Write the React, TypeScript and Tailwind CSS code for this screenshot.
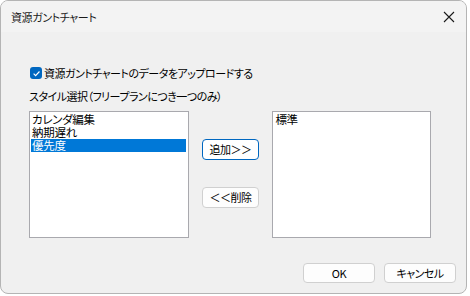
import React from "react";

const FONT = {
  fontFamily: '"Noto Sans CJK JP", "Noto Sans", sans-serif',
  fontFeatureSettings: '"palt"',
};

function CloseIcon() {
  return (
    <svg width="12" height="12" viewBox="0 0 12 12" className="text-[#1a1a1a]">
      <path d="M1 1 L11 11 M11 1 L1 11" stroke="currentColor" strokeWidth="1.1" fill="none" />
    </svg>
  );
}

function Checkbox() {
  return (
    <span className="w-[12px] h-[12px] rounded-[3px] bg-[#0067c0] flex items-center justify-center">
      <svg width="9" height="9" viewBox="0 0 10 10">
        <path d="M1.8 5.2 L4 7.3 L8.3 2.8" stroke="white" strokeWidth="1.3" fill="none" />
      </svg>
    </span>
  );
}

export default function App() {
  const leftItems = ["カレンダ編集", "納期遅れ", "優先度"];
  return (
    <div className="w-[470px] h-[296px] bg-white" style={FONT}>
      <div className="w-[467px] h-[294px] rounded-[8px] border border-[#b4b4b4] overflow-hidden flex flex-col bg-[#f0f0f0]">
        <div className="h-[31px] shrink-0 bg-[#f3f3f3] flex items-center justify-between pl-[10px] pr-[8px]">
          <span className="text-[11px] tracking-[-0.4px] text-[#1a1a1a] leading-none pt-[2px]">資源ガントチャート</span>
          <span className="w-[12px] h-[12px] flex items-center mr-[3px] mt-[1px]">
            <CloseIcon />
          </span>
        </div>

        <div className="flex-1 flex flex-col pl-[28px] pr-[35px] text-[11px] tracking-[-0.5px] text-[#000]">
          <div className="flex items-center gap-[2px] mt-[35px] h-[12px]">
            <span className="ml-[1px]">
              <Checkbox />
            </span>
            <span className="leading-none">資源ガントチャートのデータをアップロードする</span>
          </div>
          <div className="mt-[12px] h-[12px] leading-none">スタイル選択（フリープランにつき一つのみ）</div>

          <div className="flex mt-[8px] h-[127px]">
            <div className="w-[160px] h-full bg-white border border-[#a9a9ae] pt-[1px] px-[1px] text-[11.5px] tracking-[-0.3px]">
              {leftItems.map((t, i) => (
                <div
                  key={t}
                  className={
                    i === 2
                      ? "h-[13px] leading-[13px] bg-[#0078d7] text-white pl-[1px] w-[155px]"
                      : "h-[13px] leading-[13px] pl-[1px]"
                  }
                >
                  {t}
                </div>
              ))}
            </div>

            <div className="w-[84px] flex flex-col items-center pt-[28px]">
              <button className="w-[57px] h-[21px] bg-white border border-[#0067c0] rounded-[4px] leading-none flex items-center justify-center">
                追加＞＞
              </button>
              <button className="mt-[27px] w-[57px] h-[21px] bg-[#fdfdfd] border border-[#d0d0d0] rounded-[4px] leading-none flex items-center justify-center">
                ＜＜削除
              </button>
            </div>

            <div className="w-[159px] h-full bg-white border border-[#a9a9ae] pt-[1px] px-[2px] text-[11.5px] tracking-[-0.3px]">
              <div className="h-[13px] leading-[13px]">標準</div>
            </div>
          </div>

          <div className="flex justify-end gap-[9px] mt-[25px] -mr-[25px]">
            <button className="w-[72px] h-[20px] bg-[#fdfdfd] border border-[#d0d0d0] rounded-[4px] text-[11px] leading-none flex items-center justify-center">
              OK
            </button>
            <button className="w-[72px] h-[20px] bg-[#fdfdfd] border border-[#d0d0d0] rounded-[4px] leading-none flex items-center justify-center">
              キャンセル
            </button>
          </div>
        </div>
      </div>
    </div>
  );
}
